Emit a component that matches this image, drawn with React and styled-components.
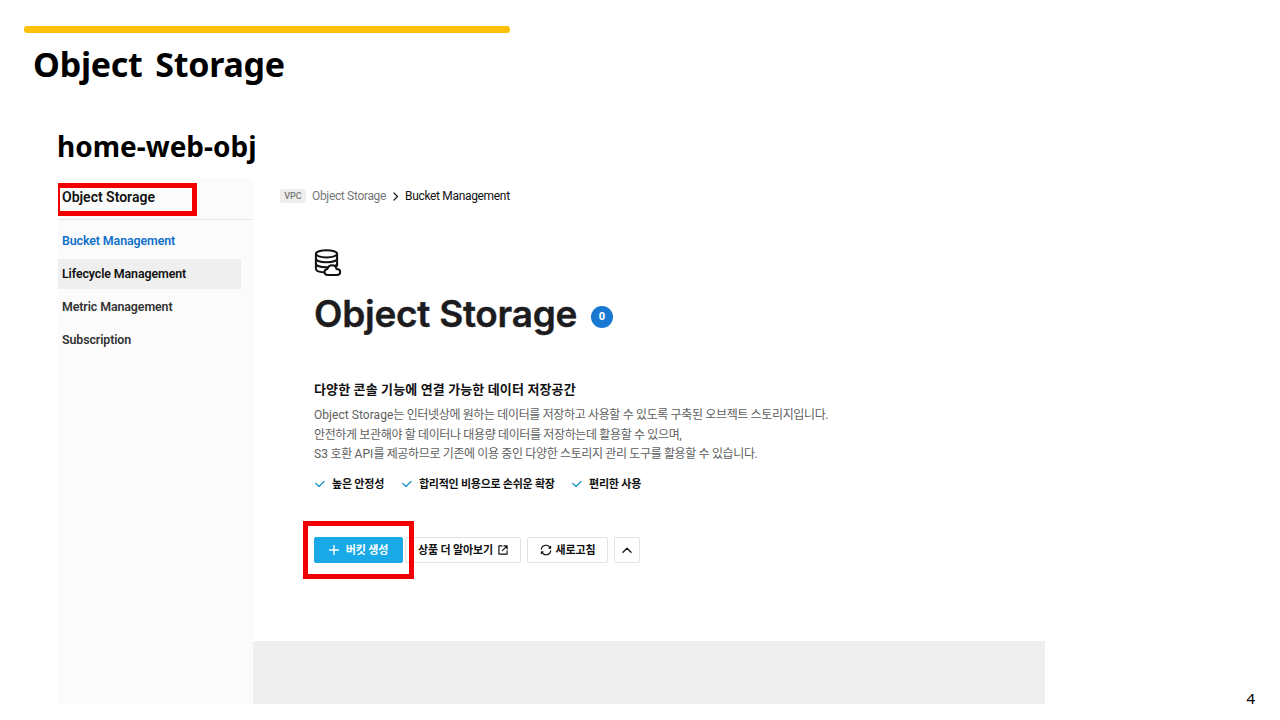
import React from 'react';
import styled, { createGlobalStyle } from 'styled-components';

const GlobalStyle = createGlobalStyle`
  * {
    box-sizing: border-box;
  }
  body {
    margin: 0;
    background: #fff;
    color: #111;
    font-family: Roboto, 'Noto Sans CJK KR', sans-serif;
  }
  h1, h2, h3, p, ul {
    margin: 0;
    padding: 0;
  }
`;

const Slide = styled.main`
  display: flex;
  flex-direction: column;
  width: 1280px;
  height: 720px;
  overflow: hidden;
  padding-top: 26px;
`;

const AccentBar = styled.div`
  flex: none;
  width: 486px;
  height: 7px;
  margin-left: 24px;
  border-radius: 3px;
  background: #fdc10a;
`;

const SlideTitle = styled.h1`
  height: 48px;
  margin: 7px 0 0 33px;
  font: 700 34px/48px 'Noto Sans', sans-serif;
  letter-spacing: -0.25px;
  word-spacing: 4px;
  color: #000;
  white-space: nowrap;
`;

const SlideSubtitle = styled.h2`
  height: 40px;
  margin: 38px 0 0 57px;
  font: 700 28px/40px 'Noto Sans', sans-serif;
  color: #000;
  white-space: nowrap;
`;

const Bottom = styled.div`
  display: flex;
  justify-content: space-between;
  height: 542px;
  margin-top: 12px;
  padding: 0 25px 0 58px;
`;

const Console = styled.section`
  display: flex;
  width: 987px;
  height: 526px;
`;

const PageNumber = styled.span`
  align-self: flex-end;
  margin-bottom: 12px;
  font: 400 15px/20px 'Noto Sans', sans-serif;
  color: #000;
`;

const Sidebar = styled.nav`
  width: 195px;
  background: #fbfbfb;
`;

const SidebarHeader = styled.div`
  position: relative;
  height: 42px;
  padding: 10px 4px 0;
  border-bottom: 1px solid #e6e6e6;
  font-size: 14px;
  line-height: 19px;
  font-weight: 600;
`;

const Highlight = styled.span`
  position: absolute;
  top: ${p => p.$top}px;
  left: ${p => p.$left}px;
  width: ${p => p.$width}px;
  height: ${p => p.$height}px;
  border: 5px solid #f20000;
  border-left-width: ${p => p.$edge || 5}px;
  pointer-events: none;
`;

const Menu = styled.ul`
  display: flex;
  flex-direction: column;
  gap: 4px;
  margin-top: 6px;
  list-style: none;
`;

const MenuItem = styled.li`
  width: 183px;
  height: ${p => (p.$hovered ? 30 : 29)}px;
  padding-left: 4px;
  background: ${p => (p.$hovered ? '#efefef' : 'transparent')};
  color: ${p => (p.$active ? '#0f6fc9' : p.$hovered ? '#111' : '#333')};
  font-size: 12.4px;
  line-height: ${p => (p.$hovered || p.$active ? 30 : 28)}px;
  font-weight: 600;
  letter-spacing: -0.1px;
`;

const Main = styled.div`
  display: flex;
  flex: 1;
  flex-direction: column;
`;

const Breadcrumb = styled.div`
  display: flex;
  align-items: center;
  height: 16px;
  margin: 10px 0 0 27px;
  color: #777;
  font-size: 12px;
  line-height: 16px;
  letter-spacing: -0.33px;
  svg {
    margin: 0 6px 0 7px;
  }
`;

const Tag = styled.span`
  width: 26px;
  height: 14px;
  margin-right: 6px;
  border-radius: 2px;
  background: #eee;
  font-size: 9px;
  line-height: 14px;
  font-weight: 500;
  letter-spacing: 0;
  text-align: center;
`;

const Current = styled.span`
  color: #111;
`;

const Hero = styled.div`
  display: flex;
  flex: 1;
  flex-direction: column;
  align-items: flex-start;
  padding: 45px 0 0 61px;
`;

const TitleRow = styled.div`
  display: flex;
  align-items: center;
  height: 50px;
  margin-top: 12px;
`;

const Title = styled.h2`
  width: 263px;
  font: 600 37px/50px Inter, sans-serif;
  letter-spacing: -0.27px;
  color: #1c1c1e;
  -webkit-text-stroke: 0.4px #1c1c1e;
  white-space: nowrap;
`;

const Count = styled.span`
  width: 22px;
  height: 22px;
  margin: 6px 0 0 14px;
  border-radius: 50%;
  background: #1878d2;
  color: #fff;
  font-size: 11px;
  line-height: 21px;
  font-weight: 800;
  text-align: center;
`;

const Lead = styled.h3`
  margin-top: 41px;
  font-size: 13px;
  line-height: 20px;
  font-weight: 700;
  letter-spacing: 0.12px;
  white-space: nowrap;
`;

const Description = styled.p`
  margin-top: 6px;
  color: #606060;
  font-size: 12px;
  line-height: 19.5px;
  letter-spacing: -0.36px;
  white-space: nowrap;
`;

const Line = styled.span`
  display: block;
`;

const Latin = styled.span`
  letter-spacing: 0.05px;
`;

const Features = styled.div`
  display: flex;
  height: 18px;
  margin-top: 11px;
`;

const Feature = styled.span`
  display: flex;
  align-items: center;
  width: ${p => p.$width}px;
  font-size: 11px;
  line-height: 18px;
  font-weight: 700;
  letter-spacing: ${p => p.$spacing}px;
  white-space: nowrap;
  svg {
    margin: 0 7px 1px 1px;
  }
`;

const Actions = styled.div`
  position: relative;
  display: flex;
  height: 27px;
  margin-top: 43px;
`;

const Button = styled.button`
  display: flex;
  align-items: center;
  justify-content: center;
  gap: ${p => p.$gap || 4}px;
  width: ${p => p.$width}px;
  height: 26px;
  margin: 0 ${p => p.$after || 0}px 0 0;
  padding: 2px 0 0;
  border: 1px solid ${p => (p.$primary ? '#18a9e6' : '#e2e2e2')};
  border-radius: 2px;
  background: ${p => (p.$primary ? '#18a9e6' : '#fff')};
  color: ${p => (p.$primary ? '#fff' : '#111')};
  font-family: inherit;
  font-size: 11px;
  line-height: 18px;
  font-weight: 700;
  letter-spacing: -0.15px;
  white-space: nowrap;
  svg {
    margin-bottom: 2px;
  }
`;

const ListArea = styled.div`
  height: 63px;
  background: #efefef;
`;

const Icon = styled.svg`
  flex: none;
  fill: none;
  stroke: ${p => p.$color || 'currentColor'};
  stroke-linecap: round;
  stroke-linejoin: round;
`;

function StorageIcon() {
  return (
    <Icon width="28" height="28" viewBox="0 0 28 28" strokeWidth="2">
      <ellipse cx="12.500" cy="4.800" rx="10.600" ry="3.600" />
      <path d="M1.900 4.800v15c0 2.200 4 3.600 10.600 3.600M23.100 4.800v12" />
      <path d="M1.900 9.600c0 2.200 4.700 3.700 10.600 3.700s10.600-1.500 10.600-3.700" />
      <path d="M1.900 14.500c0 2.200 4.700 3.700 10.600 3.700s10.600-1.500 10.600-3.700" />
      <path
        d="M14 26c-2 0-3.500-1.300-3.500-3s1.300-2.800 2.900-3c.8-2.300 2.500-3.700 4.700-3.700 2.300 0 4 1.500 4.400 3.700 2.100 0 3.700 1.200 3.700 2.900 0 1.800-1.500 3.100-3.500 3.100z"
        fill="#fff"
      />
    </Icon>
  );
}

function CheckIcon() {
  return (
    <Icon width="10" height="8" viewBox="0 0 10 8" strokeWidth="1.4" $color="#2097cf">
      <path d="M.8 3.600l3.200 3L9 1.600" />
    </Icon>
  );
}

const menu = ['Bucket Management', 'Lifecycle Management', 'Metric Management', 'Subscription'];

const features = [
  { label: '높은 안정성', width: 87, spacing: -0.2 },
  { label: '합리적인 비용으로 손쉬운 확장', width: 170, spacing: -0.26 },
  { label: '편리한 사용', width: 80, spacing: -0.2 },
];

export default function App() {
  return (
    <Slide>
      <GlobalStyle />
      <AccentBar />
      <SlideTitle>Object Storage</SlideTitle>
      <SlideSubtitle>home-web-obj</SlideSubtitle>
      <Bottom>
        <Console>
          <Sidebar>
            <SidebarHeader>
              Object Storage
              <Highlight $top={5} $left={0} $width={139} $height={33} $edge={2} />
            </SidebarHeader>
            <Menu>
              {menu.map((label, i) => (
                <MenuItem key={label} $active={i === 0} $hovered={i === 1}>
                  {label}
                </MenuItem>
              ))}
            </Menu>
          </Sidebar>
          <Main>
            <Breadcrumb>
              <Tag>VPC</Tag>
              Object Storage
              <Icon width="6" height="9" viewBox="0 0 6 9" strokeWidth="1.3" $color="#222">
                <path d="M1 1l3.500 3.500L1 8" />
              </Icon>
              <Current>Bucket Management</Current>
            </Breadcrumb>
            <Hero>
              <StorageIcon />
              <TitleRow>
                <Title>Object Storage</Title>
                <Count>0</Count>
              </TitleRow>
              <Lead>다양한 콘솔 기능에 연결 가능한 데이터 저장공간</Lead>
              <Description>
                <Line>
                  <Latin>Object Storage</Latin>는 인터넷상에 원하는 데이터를 저장하고 사용할 수 있도록
                  구축된 오브젝트 스토리지입니다.
                </Line>
                <Line>안전하게 보관해야 할 데이터나 대용량 데이터를 저장하는데 활용할 수 있으며,</Line>
                <Line>
                  <Latin>S3</Latin> 호환 <Latin>API</Latin>를 제공하므로 기존에 이용 중인 다양한 스토리지
                  관리 도구를 활용할 수 있습니다.
                </Line>
              </Description>
              <Features>
                {features.map(f => (
                  <Feature key={f.label} $width={f.width} $spacing={f.spacing}>
                    <CheckIcon />
                    {f.label}
                  </Feature>
                ))}
              </Features>
              <Actions>
                <Button $primary $width={89} $after={2} $gap={7}>
                  <Icon width="10" height="10" viewBox="0 0 10 10" strokeWidth="1.4">
                    <path d="M5 .5v9M.5 5h9" />
                  </Icon>
                  버킷 생성
                </Button>
                <Button $width={116} $after={6} $gap={5}>
                  상품 더 알아보기
                  <Icon width="10" height="10" viewBox="0 0 11 11" strokeWidth="1.3">
                    <path d="M4.500 1H1v9h9V6.500M6.500 1H10v3.500M10 1L4.800 6.200" />
                  </Icon>
                </Button>
                <Button $width={81} $after={6}>
                  <Icon width="12" height="12" viewBox="0 0 12 12" strokeWidth="1.2">
                    <path d="M1.300 5.200A4.700 4.700 0 0 1 10.200 4M10.700 6.800A4.700 4.700 0 0 1 1.800 8M10.600 2.400v1.800H9M1.400 9.600V7.800H3" />
                  </Icon>
                  새로고침
                </Button>
                <Button $width={26}>
                  <Icon width="10" height="6" viewBox="0 0 10 6" strokeWidth="1.3">
                    <path d="M1 5.200L5 1.200l4 4" />
                  </Icon>
                </Button>
                <Highlight $top={-16} $left={-11} $width={111} $height={58} />
              </Actions>
            </Hero>
            <ListArea />
          </Main>
        </Console>
        <PageNumber>4</PageNumber>
      </Bottom>
    </Slide>
  );
}
